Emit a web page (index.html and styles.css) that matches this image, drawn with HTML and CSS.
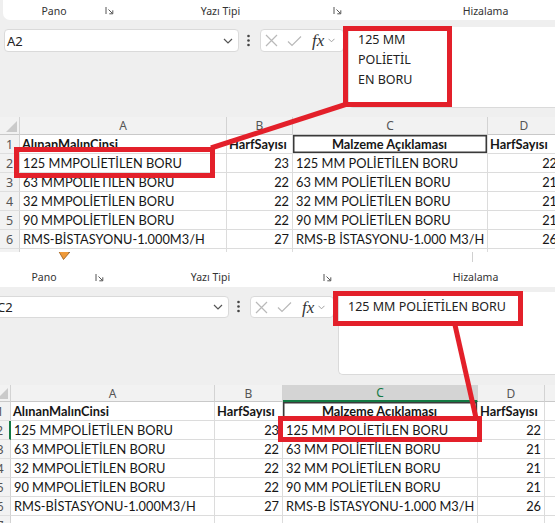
FILE: index.html
```html
<!DOCTYPE html>
<html lang="tr">
<head>
<meta charset="utf-8">
<title>Excel</title>
<link rel="stylesheet" href="styles.css">
</head>
<body>
<div class="page">

  <section class="shot shot1">
    <div class="ribbon">
      <div class="grp grp-pano">
        <div class="gtop"></div>
        <div class="grow"><span class="glabel">Pano</span><svg class="launch" width="9" height="9" viewBox="0 0 9 9"><path d="M1 1V8M3.5 3.5L7.5 7.5M7.8 4.3V7.8H4.3" fill="none" stroke="#555" stroke-width="1"/></svg></div>
      </div>
      <div class="sep"></div>
      <div class="grp grp-font">
        <div class="gtop"></div>
        <div class="grow"><span class="glabel">Yazı Tipi</span><svg class="launch" width="9" height="9" viewBox="0 0 9 9"><path d="M1 1V8M3.5 3.5L7.5 7.5M7.8 4.3V7.8H4.3" fill="none" stroke="#555" stroke-width="1"/></svg></div>
      </div>
      <div class="sep"></div>
      <div class="grp grp-align">
        <div class="gtop"></div>
        <div class="grow"><span class="glabel">Hizalama</span></div>
      </div>
    </div>

    <div class="fbar">
      <div class="namebox"><span>A2</span><svg width="10" height="6" viewBox="0 0 10 6"><path d="M1 1L5 5L9 1" fill="none" stroke="#555" stroke-width="1.2"/></svg></div>
      <svg class="vdots" width="3" height="13" viewBox="0 0 3 13"><circle cx="1.5" cy="2" r="1.3" fill="#444"/><circle cx="1.5" cy="6.5" r="1.3" fill="#444"/><circle cx="1.5" cy="11" r="1.3" fill="#444"/></svg>
      <div class="fnbox">
        <svg class="ic-x" width="13" height="13" viewBox="0 0 13 13"><path d="M1 1L12 12M12 1L1 12" stroke="#b9b9b9" stroke-width="1.2"/></svg>
        <svg class="ic-ok" width="15" height="12" viewBox="0 0 15 12"><path d="M1 6.5L5 10.5L14 1.5" fill="none" stroke="#b9b9b9" stroke-width="1.2"/></svg>
        <span class="fx">fx</span>
        <svg class="ic-ch" width="7" height="5" viewBox="0 0 7 5"><path d="M0.5 0.8L3.5 3.8L6.5 0.8" fill="none" stroke="#a0a0a0" stroke-width="1"/></svg>
      </div>
      <div class="formula"><div>125 MM</div><div>POLİETİL</div><div>EN BORU</div></div>
    </div>

    <div class="sheet">
      <div class="hd corner"><svg width="11" height="11" viewBox="0 0 11 11"><path d="M11 0V11H0Z" fill="#cacaca"/></svg></div>
      <div class="hd">A</div><div class="hd">B</div><div class="hd">C</div><div class="hd">D</div>

      <div class="rh">1</div><div class="c b">AlınanMalınCinsi</div><div class="c b">HarfSayısı</div><div class="c b ctr boxed">Malzeme Açıklaması</div><div class="c b">HarfSayısı</div>
      <div class="rh">2</div><div class="c">125 MMPOLİETİLEN BORU</div><div class="c n">23</div><div class="c">125 MM POLİETİLEN BORU</div><div class="c n">22</div>
      <div class="rh">3</div><div class="c">63 MMPOLİETİLEN BORU</div><div class="c n">22</div><div class="c">63 MM POLİETİLEN BORU</div><div class="c n">21</div>
      <div class="rh">4</div><div class="c">32 MMPOLİETİLEN BORU</div><div class="c n">22</div><div class="c">32 MM POLİETİLEN BORU</div><div class="c n">21</div>
      <div class="rh">5</div><div class="c">90 MMPOLİETİLEN BORU</div><div class="c n">22</div><div class="c">90 MM POLİETİLEN BORU</div><div class="c n">21</div>
      <div class="rh">6</div><div class="c">RMS-BİSTASYONU-1.000M3/H</div><div class="c n">27</div><div class="c">RMS-B İSTASYONU-1.000 M3/H</div><div class="c n">26</div>
      <div class="rh">7</div><div class="c"></div><div class="c"></div><div class="c"></div><div class="c"></div>
    </div>
  </section>

  <section class="shot shot2">
    <div class="ribbon">
      <div class="grp grp-pano">
        <div class="gtop"><svg class="brush" width="14" height="11" viewBox="0 0 14 11"><path d="M1 0H10L12.5 2.5L6.5 9.5Z" fill="#ee9a3a" stroke="#9a5b16" stroke-width="0.8"/><path d="M10 0L12.5 2.5" stroke="#555" stroke-width="1.2"/></svg></div>
        <div class="grow"><span class="glabel">Pano</span><svg class="launch" width="9" height="9" viewBox="0 0 9 9"><path d="M1 1V8M3.5 3.5L7.5 7.5M7.8 4.3V7.8H4.3" fill="none" stroke="#555" stroke-width="1"/></svg></div>
      </div>
      <div class="sep"></div>
      <div class="grp grp-font">
        <div class="gtop"></div>
        <div class="grow"><span class="glabel">Yazı Tipi</span><svg class="launch" width="9" height="9" viewBox="0 0 9 9"><path d="M1 1V8M3.5 3.5L7.5 7.5M7.8 4.3V7.8H4.3" fill="none" stroke="#555" stroke-width="1"/></svg></div>
      </div>
      <div class="sep"></div>
      <div class="grp grp-align">
        <div class="gtop"><span class="minisep"></span></div>
        <div class="grow"><span class="glabel">Hizalama</span></div>
      </div>
    </div>

    <div class="fbar">
      <div class="namebox"><span>C2</span><svg width="10" height="6" viewBox="0 0 10 6"><path d="M1 1L5 5L9 1" fill="none" stroke="#555" stroke-width="1.2"/></svg></div>
      <svg class="vdots" width="3" height="13" viewBox="0 0 3 13"><circle cx="1.5" cy="2" r="1.3" fill="#444"/><circle cx="1.5" cy="6.5" r="1.3" fill="#444"/><circle cx="1.5" cy="11" r="1.3" fill="#444"/></svg>
      <div class="fnbox">
        <svg class="ic-x" width="13" height="13" viewBox="0 0 13 13"><path d="M1 1L12 12M12 1L1 12" stroke="#b9b9b9" stroke-width="1.2"/></svg>
        <svg class="ic-ok" width="15" height="12" viewBox="0 0 15 12"><path d="M1 6.5L5 10.5L14 1.5" fill="none" stroke="#b9b9b9" stroke-width="1.2"/></svg>
        <span class="fx">fx</span>
        <svg class="ic-ch" width="7" height="5" viewBox="0 0 7 5"><path d="M0.5 0.8L3.5 3.8L6.5 0.8" fill="none" stroke="#a0a0a0" stroke-width="1"/></svg>
      </div>
      <div class="formula"><div>125 MM POLİETİLEN BORU</div></div>
    </div>

    <div class="sheet">
      <div class="hd corner"><svg width="11" height="11" viewBox="0 0 11 11"><path d="M11 0V11H0Z" fill="#cacaca"/></svg></div>
      <div class="hd">A</div><div class="hd">B</div><div class="hd sel">C</div><div class="hd">D</div><div class="hd"></div>

      <div class="rh">1</div><div class="c b">AlınanMalınCinsi</div><div class="c b">HarfSayısı</div><div class="c b ctr boxed">Malzeme Açıklaması</div><div class="c b">HarfSayısı</div><div class="c"></div>
      <div class="rh rsel">2</div><div class="c">125 MMPOLİETİLEN BORU</div><div class="c n">23</div><div class="c">125 MM POLİETİLEN BORU</div><div class="c n">22</div><div class="c"></div>
      <div class="rh">3</div><div class="c">63 MMPOLİETİLEN BORU</div><div class="c n">22</div><div class="c">63 MM POLİETİLEN BORU</div><div class="c n">21</div><div class="c"></div>
      <div class="rh">4</div><div class="c">32 MMPOLİETİLEN BORU</div><div class="c n">22</div><div class="c">32 MM POLİETİLEN BORU</div><div class="c n">21</div><div class="c"></div>
      <div class="rh">5</div><div class="c">90 MMPOLİETİLEN BORU</div><div class="c n">22</div><div class="c">90 MM POLİETİLEN BORU</div><div class="c n">21</div><div class="c"></div>
      <div class="rh">6</div><div class="c">RMS-BİSTASYONU-1.000M3/H</div><div class="c n">27</div><div class="c">RMS-B İSTASYONU-1.000 M3/H</div><div class="c n">26</div><div class="c"></div>
      <div class="rh">7</div><div class="c"></div><div class="c"></div><div class="c"></div><div class="c"></div><div class="c"></div>
    </div>
  </section>

  <svg class="annot" width="555" height="523" viewBox="0 0 555 523">
    <g fill="none" stroke="#e3202a" stroke-width="5">
      <rect x="345.5" y="28.5" width="104" height="76"/>
      <rect x="16.5" y="149.5" width="196" height="26"/>
      <line x1="211" y1="148" x2="347" y2="104"/>
      <rect x="335.5" y="293.5" width="185" height="30"/>
      <rect x="280.5" y="418.5" width="199" height="21"/>
      <line x1="455" y1="325" x2="476" y2="418"/>
    </g>
  </svg>
</div>
</body>
</html>
```

FILE: styles.css
```css
* { box-sizing: border-box; margin: 0; padding: 0; }
html, body { width: 555px; height: 523px; overflow: hidden; }
body { background: #efefef; font-family: "Noto Sans", "Open Sans", sans-serif; color: #222; }

.page { position: relative; width: 555px; height: 523px; overflow: hidden; }

.shot { overflow: hidden; }
.shot1 { height: 252px; width: 555px; }
.shot2 { height: 271px; width: 575px; margin-left: -10px; }

/* ribbon */
.ribbon { display: flex; background: #fff; margin-left: 3px; border-radius: 0 0 0 7px; }
.shot1 .ribbon { height: 20px; }
.shot2 .ribbon { height: 35px; }
.grp { display: flex; flex-direction: column; }
.gtop { flex: 1; display: flex; }
.grow { display: flex; align-items: center; padding-bottom: 3px; height: 17px; }
.shot1 .grow { padding-bottom: 2px; }
.glabel { font-size: 10.5px; line-height: 14px; color: #333; text-align: center; }
.launch { display: block; flex: none; }
.grp-pano { width: 114px; }
.grp-pano .glabel { width: 102px; }
.grp-font { width: 230px; }
.grp-font .glabel { width: 213px; }
.grp-font .launch { margin-left: 6px; }
.grp-align { width: 300px; }
.grp-align .glabel { width: 287px; }
.sep { width: 1px; background: #d8d8d8; align-self: flex-start; height: calc(100% - 5px); }
.brush { display: block; margin: -2px 0 0 64px; }
.minisep { display: block; width: 1px; height: 10px; background: #d0d0d0; margin-left: 140px; }

/* formula bar */
.fbar { display: flex; align-items: flex-start; }
.shot1 .fbar { margin-top: 7px; height: 81px; }
.shot2 .fbar { margin-top: 5px; height: 83px; }
.namebox { width: 235px; margin-left: 4px; background: #fff; border: 1px solid #dadada; border-radius: 4px;
  display: flex; align-items: center; justify-content: space-between; padding: 0 5px 0 2px;
  font-size: 13px; color: #222; }
.shot1 .namebox { margin-top: 2px; height: 23px; }
.shot2 .namebox { margin-top: 4px; height: 22px; }
.vdots { display: block; margin-left: 8px; flex: none; }
.shot1 .vdots { margin-top: 7px; }
.shot2 .vdots { margin-top: 8px; }
.fnbox { width: 84px; margin-left: 10px; background: #fff; border: 1px solid #dadada; border-radius: 4px;
  display: flex; align-items: center; padding-left: 4px; }
.shot1 .fnbox { margin-top: 2px; height: 23px; }
.shot2 .fnbox { margin-top: 4px; height: 22px; }
.ic-x { display: block; }
.ic-ok { display: block; margin-left: 9px; }
.fx { font-family: "Liberation Serif", serif; font-style: italic; font-size: 17px; color: #333; margin-left: 10px; line-height: 1; }
.ic-ch { display: block; margin-left: 4px; }
.formula { flex: 1; align-self: stretch; margin-left: 4px; background: #fff; border-left: 1px solid #dadada;
  border-bottom: 1px solid #dadada; border-radius: 0 0 0 5px; padding-left: 9px;
  font-size: 12.5px; line-height: 20px; color: #222; }
.shot1 .formula { padding-top: 3px; }
.shot2 .formula { padding-top: 5px; }

/* sheet */
.sheet { display: grid; font-family: "Lato", sans-serif; font-size: 12.8px; color: #161616; background: #fff; }
.shot1 .sheet { margin-top: 9px; grid-template-columns: 20px 207px 66px 195px 73px; grid-template-rows: 18px repeat(7, 19px); }
.shot2 .sheet { margin-top: 10px; grid-template-columns: 21px 204px 68px 195px 67px 20px; grid-template-rows: 17px repeat(7, 19px); }

.hd { background: #f2f2f2; color: #555; font-family: "Noto Sans", sans-serif; font-size: 12px;
  display: flex; align-items: center; justify-content: center;
  border-right: 1px solid #d3d3d3; border-bottom: 1px solid #c9c9c9; }
.corner { justify-content: flex-end; align-items: flex-end; padding: 0 2px 2px 0; }
.hd.sel { background: #d4d4d4; color: #137a43; border-bottom: 2px solid #137a43; }
.rh { background: #f2f2f2; color: #555; font-family: "Noto Sans", sans-serif; font-size: 12.5px;
  display: flex; align-items: center; justify-content: center;
  border-right: 1px solid #d3d3d3; border-bottom: 1px solid #dedede; }
.rh.rsel { border-right: 2px solid #137a43; }

.c { border-right: 1px solid #dcdcdc; border-bottom: 1px solid #dcdcdc; white-space: nowrap;
  padding: 0 3px; line-height: 18px; background: #fff; }
.c.b { font-weight: 700; padding-left: 2px; }
.c.n { text-align: right; padding-right: 3px; }
.c.ctr { text-align: center; }
.c.boxed { box-shadow: inset 0 0 0 1.5px #3a3a3a; }

/* annotations */
.annot { position: absolute; left: 0; top: 0; pointer-events: none; }
```
